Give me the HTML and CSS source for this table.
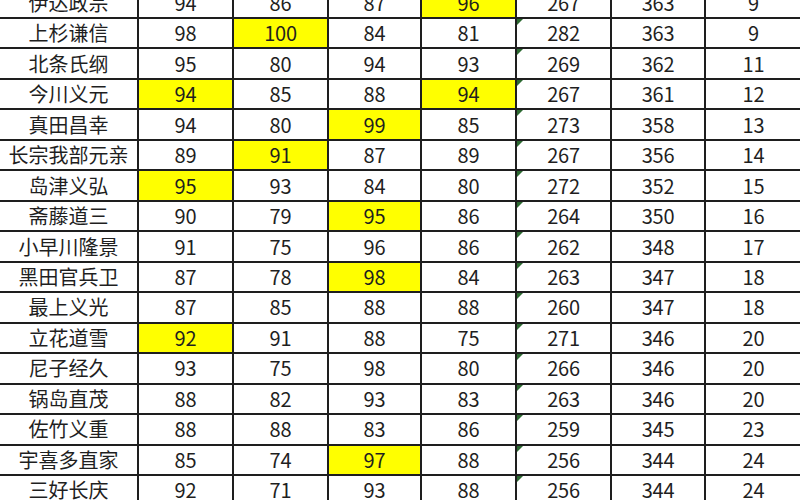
FILE: index.html
```html
<!DOCTYPE html>
<html lang="zh-CN">
<head>
<meta charset="utf-8">
<title>战国武将</title>
<link rel="stylesheet" href="styles.css">
</head>
<body>
<div class="sheet">
<div class="c name">伊达政宗</div><div class="c">94</div><div class="c">86</div><div class="c">87</div><div class="c hl">96</div><div class="c t">267</div><div class="c">363</div><div class="c">9</div>
<div class="c name">上杉谦信</div><div class="c">98</div><div class="c hl">100</div><div class="c">84</div><div class="c">81</div><div class="c t">282</div><div class="c">363</div><div class="c">9</div>
<div class="c name">北条氏纲</div><div class="c">95</div><div class="c">80</div><div class="c">94</div><div class="c">93</div><div class="c t">269</div><div class="c">362</div><div class="c">11</div>
<div class="c name">今川义元</div><div class="c hl">94</div><div class="c">85</div><div class="c">88</div><div class="c hl">94</div><div class="c t">267</div><div class="c">361</div><div class="c">12</div>
<div class="c name">真田昌幸</div><div class="c">94</div><div class="c">80</div><div class="c hl">99</div><div class="c">85</div><div class="c t">273</div><div class="c">358</div><div class="c">13</div>
<div class="c name">长宗我部元亲</div><div class="c">89</div><div class="c hl">91</div><div class="c">87</div><div class="c">89</div><div class="c t">267</div><div class="c">356</div><div class="c">14</div>
<div class="c name">岛津义弘</div><div class="c hl">95</div><div class="c">93</div><div class="c">84</div><div class="c">80</div><div class="c t">272</div><div class="c">352</div><div class="c">15</div>
<div class="c name">斋藤道三</div><div class="c">90</div><div class="c">79</div><div class="c hl">95</div><div class="c">86</div><div class="c t">264</div><div class="c">350</div><div class="c">16</div>
<div class="c name">小早川隆景</div><div class="c">91</div><div class="c">75</div><div class="c">96</div><div class="c">86</div><div class="c t">262</div><div class="c">348</div><div class="c">17</div>
<div class="c name">黑田官兵卫</div><div class="c">87</div><div class="c">78</div><div class="c hl">98</div><div class="c">84</div><div class="c t">263</div><div class="c">347</div><div class="c">18</div>
<div class="c name">最上义光</div><div class="c">87</div><div class="c">85</div><div class="c">88</div><div class="c">88</div><div class="c t">260</div><div class="c">347</div><div class="c">18</div>
<div class="c name">立花道雪</div><div class="c hl">92</div><div class="c">91</div><div class="c">88</div><div class="c">75</div><div class="c t">271</div><div class="c">346</div><div class="c">20</div>
<div class="c name">尼子经久</div><div class="c">93</div><div class="c">75</div><div class="c">98</div><div class="c">80</div><div class="c t">266</div><div class="c">346</div><div class="c">20</div>
<div class="c name">锅岛直茂</div><div class="c">88</div><div class="c">82</div><div class="c">93</div><div class="c">83</div><div class="c t">263</div><div class="c">346</div><div class="c">20</div>
<div class="c name">佐竹义重</div><div class="c">88</div><div class="c">88</div><div class="c">83</div><div class="c">86</div><div class="c t">259</div><div class="c">345</div><div class="c">23</div>
<div class="c name">宇喜多直家</div><div class="c">85</div><div class="c">74</div><div class="c hl">97</div><div class="c">88</div><div class="c t">256</div><div class="c">344</div><div class="c">24</div>
<div class="c name">三好长庆</div><div class="c">92</div><div class="c">71</div><div class="c">93</div><div class="c">88</div><div class="c t">256</div><div class="c">344</div><div class="c">24</div>
</div>
</body>
</html>
```

FILE: styles.css
```css
html, body {
  margin: 0;
  padding: 0;
  background: #ffffff;
  overflow: hidden;
  width: 800px;
  height: 500px;
}

.sheet {
  display: grid;
  grid-template-columns: 137px 93px 93px 91px 93px 93px 92px 95px;
  grid-auto-rows: 28.47px;
  column-gap: 2px;
  row-gap: 2px;
  background: #1e1e1e;
  margin-top: -11.47px;
  width: 800px;
  font-family: "Noto Sans CJK SC", "Noto Sans", sans-serif;
  font-size: 20px;
  color: #1f1f1f;
}

.c {
  position: relative;
  background: #ffffff;
  display: flex;
  align-items: center;
  justify-content: center;
  line-height: 1;
  letter-spacing: -0.2px;
}

.name {
  letter-spacing: 0;
}

.hl {
  background: #ffff00;
}

.t::before {
  content: "";
  position: absolute;
  top: 0;
  left: 0;
  width: 0;
  height: 0;
  border-top: 6px solid #2d6a32;
  border-right: 6px solid transparent;
}
```
